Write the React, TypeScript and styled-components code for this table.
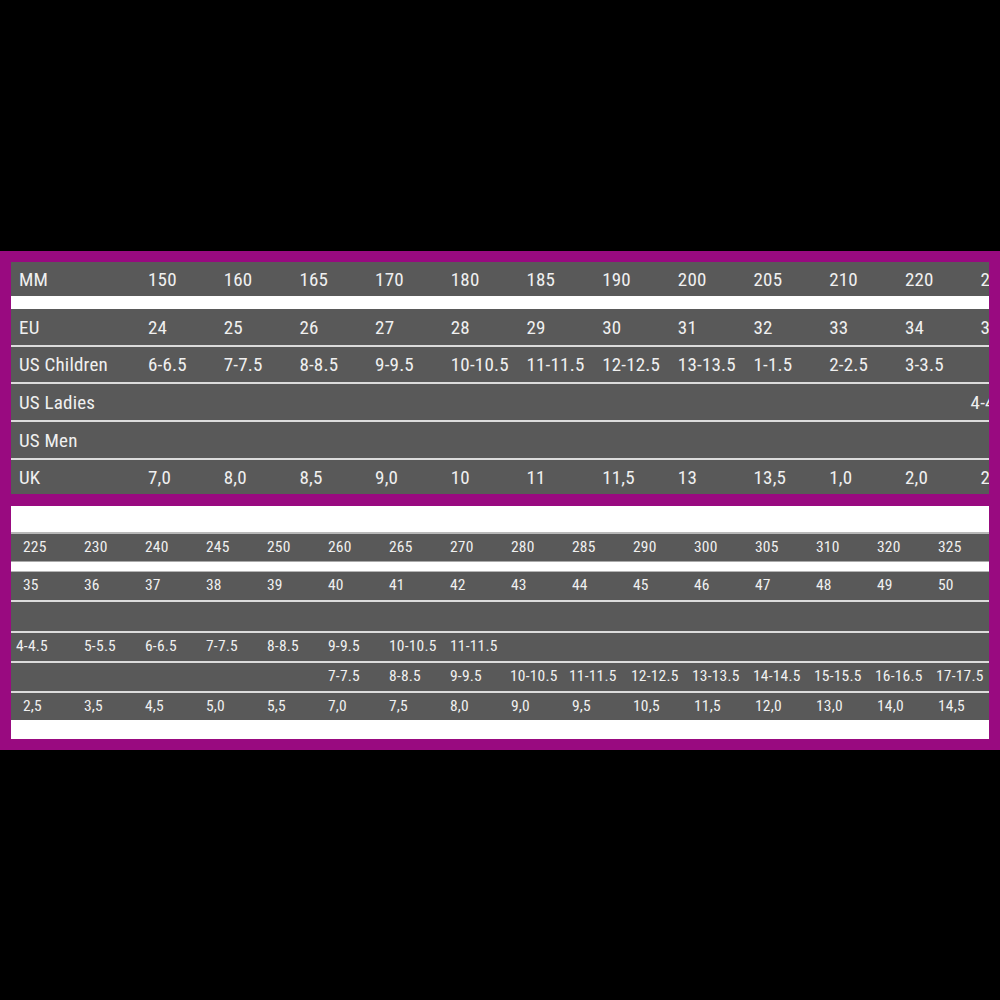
import React from "react";
import styled, { createGlobalStyle } from "styled-components";

const Global = createGlobalStyle`
  html, body { margin: 0; padding: 0; background: #000; }
  #root { height: 1000px; }
`;

const Page = styled.div`
  height: 1000px;
  display: flex;
  flex-direction: column;
  justify-content: center;
  background: #000;
`;

const Frame = styled.div`
  width: 1000px;
  box-sizing: border-box;
  background: #990a80;
  padding: 11px;
  display: flex;
  flex-direction: column;
  gap: 12px;
`;

const Table = styled.div`
  display: flex;
  flex-direction: column;
  overflow: hidden;
  background: #595959;
  font-family: "Liberation Sans Narrow", "Roboto Condensed", "DejaVu Sans Condensed", "Liberation Sans", sans-serif;
  font-stretch: condensed;
  color: #f0f0f0;
`;

const BottomTable = styled(Table)`
  background: #fff;
`;

const Row = styled.div<{ $h: number; $cols: string; $pad: number; $size: number }>`
  height: ${(p) => p.$h}px;
  display: grid;
  grid-template-columns: ${(p) => p.$cols};
  align-items: center;
  padding-left: ${(p) => p.$pad}px;
  background: #595959;
  font-size: ${(p) => p.$size}px;
  letter-spacing: 0.2px;
  white-space: nowrap;
  overflow: hidden;
`;

const Cell = styled.span<{ $shift?: number }>`
  display: block;
  margin-left: ${(p) => p.$shift ?? 0}px;
  line-height: 1;
  padding-top: 1px;
`;

const Line = styled.div<{ $h: number; $c: string }>`
  height: ${(p) => p.$h}px;
  background: ${(p) => p.$c};
`;

const Band = styled.div<{ $h: number }>`
  height: ${(p) => p.$h}px;
  box-sizing: border-box;
  background: #fff;
  border-top: 1px solid #a9a9a9;
  border-bottom: 1px solid #b5b5b5;
`;

const WhiteSpace = styled.div<{ $h: number }>`
  height: ${(p) => p.$h}px;
  background: #fff;
`;

type RowData = { label?: string; cells: (string | [string, number])[]; h: number };

const TOP_COLS = "129px repeat(12, 75.7px)";
const BOT_COLS = "repeat(16, 61px)";

const topRows: RowData[] = [
  { label: "MM", h: 34, cells: ["150", "160", "165", "170", "180", "185", "190", "200", "205", "210", "220", "225"] },
  { label: "EU", h: 36, cells: ["24", "25", "26", "27", "28", "29", "30", "31", "32", "33", "34", "35"] },
  { label: "US Children", h: 35, cells: ["6-6.5", "7-7.5", "8-8.5", "9-9.5", "10-10.5", "11-11.5", "12-12.5", "13-13.5", "1-1.5", "2-2.5", "3-3.5", ""] },
  { label: "US Ladies", h: 36, cells: ["", "", "", "", "", "", "", "", "", "", "", ["4-4.5", -10]] },
  { label: "US Men", h: 36, cells: [] },
  { label: "UK", h: 34, cells: ["7,0", "8,0", "8,5", "9,0", "10", "11", "11,5", "13", "13,5", "1,0", "2,0", "2,5"] },
];

const botRows: RowData[] = [
  { h: 27, cells: ["225", "230", "240", "245", "250", "260", "265", "270", "280", "285", "290", "300", "305", "310", "320", "325"] },
  { h: 28, cells: ["35", "36", "37", "38", "39", "40", "41", "42", "43", "44", "45", "46", "47", "48", "49", "50"] },
  { h: 29, cells: [] },
  { h: 28, cells: [["4-4.5", -7], "5-5.5", "6-6.5", "7-7.5", "8-8.5", "9-9.5", "10-10.5", "11-11.5"] },
  { h: 28, cells: ["", "", "", "", "", "7-7.5", "8-8.5", "9-9.5", ["10-10.5", -1], ["11-11.5", -3], ["12-12.5", -2], ["13-13.5", -2], ["14-14.5", -2], ["15-15.5", -2], ["16-16.5", -2], ["17-17.5", -2]] },
  { h: 27, cells: ["2,5", "3,5", "4,5", "5,0", "5,5", "7,0", "7,5", "8,0", "9,0", "9,5", "10,5", "11,5", "12,0", "13,0", "14,0", "14,5"] },
];

function renderCells(cells: RowData["cells"], prefix: string) {
  return cells.map((c, i) => {
    const [text, shift] = Array.isArray(c) ? c : [c, 0];
    return (
      <Cell key={prefix + i} $shift={shift}>
        {text}
      </Cell>
    );
  });
}

function TopRow({ r }: { r: RowData }) {
  return (
    <Row $h={r.h} $cols={TOP_COLS} $pad={8} $size={19}>
      <Cell>{r.label}</Cell>
      {renderCells(r.cells, r.label ?? "")}
    </Row>
  );
}

function BotRow({ r, k }: { r: RowData; k: number }) {
  return (
    <Row $h={r.h} $cols={BOT_COLS} $pad={12} $size={15.5}>
      {renderCells(r.cells, "b" + k)}
    </Row>
  );
}

export default function App() {
  return (
    <>
      <Global />
      <Page>
        <Frame>
          <Table>
            <TopRow r={topRows[0]} />
            <Line $h={13} $c="#ffffff" />
            <TopRow r={topRows[1]} />
            <Line $h={2} $c="#dcdcdc" />
            <TopRow r={topRows[2]} />
            <Line $h={2} $c="#dcdcdc" />
            <TopRow r={topRows[3]} />
            <Line $h={2} $c="#dcdcdc" />
            <TopRow r={topRows[4]} />
            <Line $h={2} $c="#dcdcdc" />
            <TopRow r={topRows[5]} />
          </Table>
          <BottomTable>
            <WhiteSpace $h={26} />
            <Line $h={2} $c="#b8b8b8" />
            <BotRow r={botRows[0]} k={0} />
            <Band $h={11} />
            <BotRow r={botRows[1]} k={1} />
            <Line $h={2} $c="#dcdcdc" />
            <BotRow r={botRows[2]} k={2} />
            <Line $h={2} $c="#dcdcdc" />
            <BotRow r={botRows[3]} k={3} />
            <Line $h={2} $c="#dcdcdc" />
            <BotRow r={botRows[4]} k={4} />
            <Line $h={2} $c="#dcdcdc" />
            <BotRow r={botRows[5]} k={5} />
            <WhiteSpace $h={19} />
          </BottomTable>
        </Frame>
      </Page>
    </>
  );
}
